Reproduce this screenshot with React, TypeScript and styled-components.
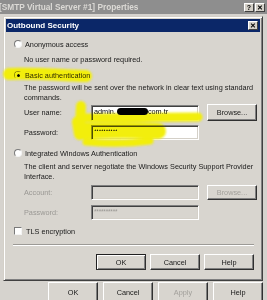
import React from "react";
import styled, { createGlobalStyle } from "styled-components";

const Global = createGlobalStyle`
  html, body { margin: 0; padding: 0; background: #d6d3ce; }
  body { width: 267px; height: 300px; overflow: hidden; font-family: "Liberation Sans", Arial, sans-serif; }
  * { box-sizing: border-box; }
`;

const Window = styled.div`
  position: relative;
  width: 267px;
  height: 300px;
  background: #d6d3ce;
  display: flex;
  flex-direction: column;
  overflow: hidden;
  color: #1a1a1a;
  font-size: 7.3px;
`;

const OuterTitle = styled.div`
  height: 14px;
  flex: none;
  background: #8e8e8e;
  display: flex;
  align-items: center;
  justify-content: space-between;
  padding: 0 2px 0 0;
`;

const OuterTitleText = styled.span`
  color: #dcdad6;
  font-weight: bold;
  font-size: 8.3px;
  white-space: nowrap;
  margin-left: -1px;
`;

const CapGroup = styled.div`
  display: flex;
  gap: 1px;
`;

const CapBtn = styled.div`
  width: 10px;
  height: 9px;
  background: #d4d0c8;
  border-top: 1px solid #fff;
  border-left: 1px solid #fff;
  border-right: 1px solid #404040;
  border-bottom: 1px solid #404040;
  display: flex;
  align-items: center;
  justify-content: center;
  font-size: 7px;
  font-weight: bold;
  color: #000;
  line-height: 1;
`;

const Dialog = styled.div`
  margin: 2px 0 0 3px;
  width: 260px;
  height: 265px;
  flex: none;
  background: #d8d5cf;
  border-top: 1px solid #d4d0c8;
  border-left: 1px solid #d4d0c8;
  border-right: 1px solid #404040;
  border-bottom: 1px solid #404040;
  box-shadow: inset 1px 1px 0 #fff, inset -1px -1px 0 #808080;
  padding: 2px;
  display: flex;
  flex-direction: column;
`;

const TitleBar = styled.div`
  height: 13px;
  flex: none;
  background: #0b2768;
  display: flex;
  align-items: center;
  justify-content: space-between;
  padding: 0 2px 0 1px;
`;

const TitleText = styled.span`
  color: #fff;
  font-weight: bold;
  font-size: 8px;
  white-space: nowrap;
`;

const CloseBtn = styled(CapBtn)`
  width: 10px;
  height: 9px;
`;

const Content = styled.div`
  display: flex;
  flex-direction: column;
  padding: 0 6px 0 8px;
`;

const OptionRow = styled.div<{ $mt: number }>`
  margin-top: ${(p) => p.$mt}px;
  height: 10px;
  display: flex;
  align-items: center;
  gap: 3px;
  white-space: nowrap;
`;

const Radio = styled.span<{ $checked?: boolean }>`
  width: 8px;
  height: 8px;
  border-radius: 50%;
  background: #fff;
  border: 1px solid;
  border-color: #7a7a7a #f4f4f4 #f4f4f4 #7a7a7a;
  display: flex;
  align-items: center;
  justify-content: center;
  flex: none;
  &::after {
    content: "";
    width: 3px;
    height: 3px;
    border-radius: 50%;
    background: ${(p) => (p.$checked ? "#000" : "transparent")};
  }
`;

const Check = styled.span`
  width: 8px;
  height: 8px;
  background: #fff;
  border: 1px solid;
  border-color: #7a7a7a #f4f4f4 #f4f4f4 #7a7a7a;
  flex: none;
  margin-right: 1px;
`;

const Desc = styled.div<{ $mt: number }>`
  margin-top: ${(p) => p.$mt}px;
  padding-left: 10px;
  line-height: 10px;
`;

const FieldRow = styled.div<{ $mt: number }>`
  margin-top: ${(p) => p.$mt}px;
  display: flex;
  align-items: center;
  padding-left: 10px;
`;

const Label = styled.span<{ $disabled?: boolean }>`
  width: 67px;
  flex: none;
  color: ${(p) => (p.$disabled ? "#9a9894" : "inherit")};
`;

const Field = styled.div<{ $disabled?: boolean; $h: number }>`
  width: 108px;
  height: ${(p) => p.$h}px;
  flex: none;
  background: ${(p) => (p.$disabled ? "#d8d5cf" : "#fff")};
  border-top: 1px solid #808080;
  border-left: 1px solid #808080;
  border-right: 1px solid #fff;
  border-bottom: 1px solid #fff;
  box-shadow: inset 1px 1px 0 #404040, inset -1px -1px 0 #d4d0c8;
  display: flex;
  align-items: flex-start;
  padding: 2px 0 0 2px;
  color: ${(p) => (p.$disabled ? "#9a9894" : "#000")};
  white-space: nowrap;
  line-height: 8px;
`;

const Stars = styled.span`
  font-size: 6.5px;
  letter-spacing: -0.2px;
  line-height: 6px;
  margin-top: 1px;
`;

const Censor = styled.span`
  display: inline-block;
  width: 31px;
  height: 7px;
  border-radius: 4px;
  background: #000;
  margin: 0 0 0 1px;
`;

const Button = styled.div<{ $default?: boolean; $disabled?: boolean; $w?: number; $h?: number }>`
  width: ${(p) => p.$w ?? 50}px;
  height: ${(p) => p.$h ?? 16}px;
  flex: none;
  background: #d8d5cf;
  border-top: 1px solid ${(p) => (p.$default ? "#202020" : "#fff")};
  border-left: 1px solid ${(p) => (p.$default ? "#202020" : "#fff")};
  border-right: 1px solid #303030;
  border-bottom: 1px solid #303030;
  box-shadow: ${(p) =>
    p.$default
      ? "inset 1px 1px 0 #fff, inset -1px -1px 0 #808080"
      : "inset -1px -1px 0 #808080"};
  display: flex;
  align-items: center;
  justify-content: center;
  color: ${(p) => (p.$disabled ? "#a3a19c" : "#1a1a1a")};
  white-space: nowrap;
`;

const BrowseSlot = styled.div`
  margin-left: 8px;
  display: flex;
`;

const Separator = styled.div<{ $mt: number }>`
  margin-top: ${(p) => p.$mt}px;
  margin-left: -1px;
  height: 2px;
  border-top: 1px solid #9c9a96;
  border-bottom: 1px solid #fff;
`;

const DialogButtons = styled.div<{ $mt: number }>`
  margin-top: ${(p) => p.$mt}px;
  display: flex;
  justify-content: flex-end;
  gap: 4px;
`;

const OuterButtons = styled.div`
  margin-top: 1px;
  display: flex;
  justify-content: flex-end;
  gap: 5px;
  padding-right: 4px;
`;

const HighlightLayer = styled.svg<{ $mode: string }>`
  position: absolute;
  left: 0;
  top: 0;
  width: 267px;
  height: 300px;
  pointer-events: none;
  mix-blend-mode: ${(p) => p.$mode};
`;

function HighlightShapes({ color }: { color: string }) {
  return (
    <g fill={color} stroke={color} strokeLinecap="round" strokeLinejoin="round" filter="url(#soft)">
      <path d="M9 74 C 30 73, 60 75, 86 76" strokeWidth="12" fill="none" />
      <path d="M81 106 L 80 128" strokeWidth="10" fill="none" />
      <path d="M78 122 L 80 134" strokeWidth="12" fill="none" />
      <path d="M84 118 L 198 117" strokeWidth="9" fill="none" />
      <path d="M82 131 C 110 130, 140 130, 158 131" strokeWidth="16" fill="none" />
      <path d="M86 142 C 110 144, 135 143, 150 141" strokeWidth="7" fill="none" />
    </g>
  );
}

function Highlight({ mode, color }: { mode: string; color: string }) {
  return (
    <HighlightLayer $mode={mode} viewBox="0 0 267 300">
      <defs>
        <filter id="soft" x="-10%" y="-30%" width="120%" height="160%">
          <feGaussianBlur stdDeviation="1.2" />
        </filter>
      </defs>
      <HighlightShapes color={color} />
    </HighlightLayer>
  );
}

export default function App() {
  return (
    <>
      <Global />
      <Window>
        <OuterTitle>
          <OuterTitleText>[SMTP Virtual Server #1] Properties</OuterTitleText>
          <CapGroup>
            <CapBtn>?</CapBtn>
            <CapBtn>✕</CapBtn>
          </CapGroup>
        </OuterTitle>
        <Dialog>
          <TitleBar>
            <TitleText>Outbound Security</TitleText>
            <CloseBtn>✕</CloseBtn>
          </TitleBar>
          <Content>
            <OptionRow $mt={7}>
              <Radio />
              <span>Anonymous access</span>
            </OptionRow>
            <Desc $mt={6}>No user name or password required.</Desc>
            <OptionRow $mt={5}>
              <Radio $checked />
              <span>Basic authentication</span>
            </OptionRow>
            <Desc $mt={3}>
              The password will be sent over the network in clear text using standard
              <br />
              commands.
            </Desc>
            <FieldRow $mt={1}>
              <Label>User name:</Label>
              <Field $h={16}>
                admin.<Censor />com.tr
              </Field>
              <BrowseSlot>
                <Button $w={50} $h={17}>Browse...</Button>
              </BrowseSlot>
            </FieldRow>
            <FieldRow $mt={4}>
              <Label>Password:</Label>
              <Field $h={15}>
                <Stars>**********</Stars>
              </Field>
            </FieldRow>
            <OptionRow $mt={8}>
              <Radio />
              <span>Integrated Windows Authentication</span>
            </OptionRow>
            <Desc $mt={4}>
              The client and server negotiate the Windows Security Support Provider
              <br />
              Interface.
            </Desc>
            <FieldRow $mt={3}>
              <Label $disabled>Account:</Label>
              <Field $disabled $h={15} />
              <BrowseSlot>
                <Button $disabled $w={50} $h={15}>Browse...</Button>
              </BrowseSlot>
            </FieldRow>
            <FieldRow $mt={5}>
              <Label $disabled>Password:</Label>
              <Field $disabled $h={15}>
                <Stars>**********</Stars>
              </Field>
            </FieldRow>
            <OptionRow $mt={6}>
              <Check />
              <span>TLS encryption</span>
            </OptionRow>
            <Separator $mt={8} />
            <DialogButtons $mt={8}>
              <Button $default>OK</Button>
              <Button>Cancel</Button>
              <Button>Help</Button>
            </DialogButtons>
          </Content>
        </Dialog>
        <OuterButtons>
          <Button $h={20}>OK</Button>
          <Button $h={20}>Cancel</Button>
          <Button $h={20} $disabled>Apply</Button>
          <Button $h={20}>Help</Button>
        </OuterButtons>
        <Highlight mode="color-dodge" color="rgb(48,48,0)" />
        <Highlight mode="multiply" color="#f2ee10" />
      </Window>
    </>
  );
}
